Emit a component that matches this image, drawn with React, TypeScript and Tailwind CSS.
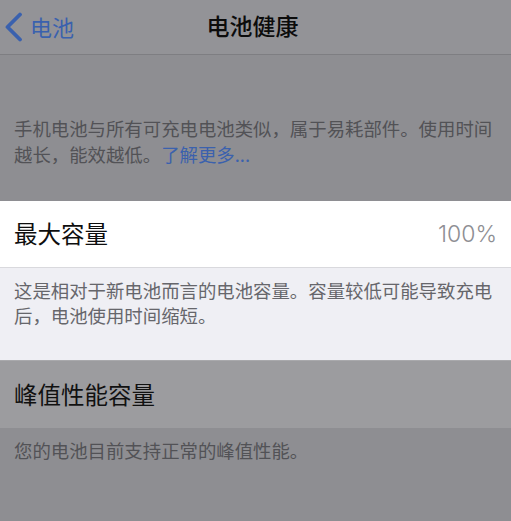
import React from 'react'

const cjk = { fontFamily: '"Noto Sans CJK SC", "Noto Sans", sans-serif' }

export default function App() {
  return (
    <div className="w-[511px] h-[521px] overflow-hidden bg-[#8e8e92] flex flex-col" style={cjk}>
      {/* Nav bar */}
      <div className="h-[55px] shrink-0 bg-[#939397] border-b border-[#7e7e82] flex items-center relative">
        <div className="flex items-center pl-[4px] gap-[7px] text-[#3a61ae] text-[22px]">
          <svg width="19" height="30" viewBox="0 0 19 30" fill="none">
            <path d="M16 2.5 L3.5 15 L16 27.5" stroke="#3a61ae" strokeWidth="3.8" strokeLinecap="round" strokeLinejoin="round" />
          </svg>
          <span className="leading-none -mt-[2px]">电池</span>
        </div>
        <div className="absolute left-0 right-0 top-0 h-[54px] flex items-center justify-center pointer-events-none">
          <span className="text-[23px] font-medium text-[#0c0c0c] -mt-[4px] -ml-[6px]">电池健康</span>
        </div>
      </div>

      {/* Intro */}
      <div className="h-[146px] shrink-0 px-[14px] pt-[60px] text-[18.4px] leading-[26px] text-[#525256]">
        <p>
          手机电池与所有可充电电池类似，属于易耗部件。使用时间越长，能效越低。<span className="text-[#3b61ad]">了解更多...</span>
        </p>
      </div>

      {/* Maximum capacity */}
      <div className="h-[67px] shrink-0 bg-white border-b border-[#d9d9dd] flex items-center justify-between px-[14px]">
        <span className="text-[23.5px] text-[#0e0e0e]">最大容量</span>
        <span className="text-[23px] text-[#8e8e93]" style={{ fontFamily: 'Inter, "Noto Sans", sans-serif', fontWeight: 300 }}>100%</span>
      </div>
      <div className="h-[92px] shrink-0 bg-[#efeff4] px-[14px] pt-[10px] text-[18.4px] leading-[25px] text-[#66666b]">
        这是相对于新电池而言的电池容量。容量较低可能导致充电后，电池使用时间缩短。
      </div>

      {/* Peak performance */}
      <div className="h-[68px] shrink-0 bg-[#9c9c9f] border-t border-[#a9a9ac] flex items-center px-[14px]">
        <span className="text-[23.5px] text-[#111]">峰值性能容量</span>
      </div>
      <div className="flex-1 px-[14px] pt-[9px] text-[18.4px] leading-[26px] text-[#525256]">
        您的电池目前支持正常的峰值性能。
      </div>
    </div>
  )
}
